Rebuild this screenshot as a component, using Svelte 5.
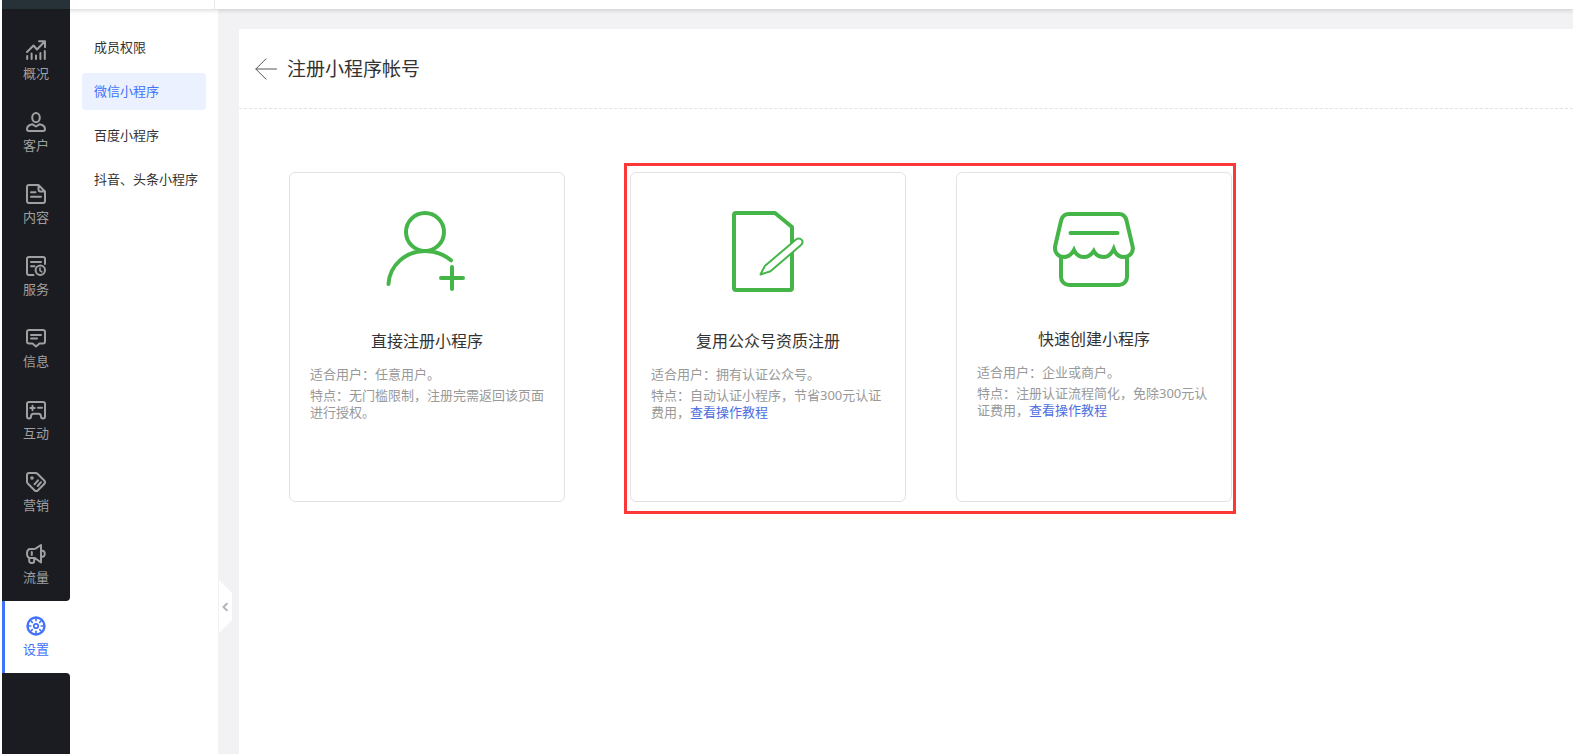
<script>
  const rail = [
    { id: 'overview', label: '概况' },
    { id: 'customer', label: '客户' },
    { id: 'content', label: '内容' },
    { id: 'service', label: '服务' },
    { id: 'message', label: '信息' },
    { id: 'interact', label: '互动' },
    { id: 'marketing', label: '营销' },
    { id: 'traffic', label: '流量' },
    { id: 'settings', label: '设置' }
  ];
  let section = $state('settings');

  const menu = ['成员权限', '微信小程序', '百度小程序', '抖音、头条小程序'];
  let page = $state('微信小程序');
</script>

<div class="app">
  <header class="topbar">
    <div class="brand"></div>
    <div class="corner"></div>
  </header>

  <div class="body">
    <nav class="rail" aria-label="主导航">
      <div class="rail-cap"></div>
      {#each rail as item}
        <button class="rail-item" class:active={section === item.id} onclick={() => (section = item.id)}>
          <svg class="rail-icon" viewBox="0 0 20 20" aria-hidden="true">
            {#if item.id === 'overview'}
              <path d="M1 12 7.5 5.5 11 9.5 18 2.2M13 1.2h6v6" />
              <path d="M1.2 16v3M5.6 13.500v5.500M10 15.500v3.500M14.400 13V19M18.800 11v8" />
            {:else if item.id === 'customer'}
              <ellipse cx="10" cy="5.6" rx="3.8" ry="4.7" />
              <path d="M6.5 12.3c-3 .6-5.5 2-5.5 4.7 0 1.500.8 2 2 2h14c1.200 0 2-.5 2-2 0-2.700-2.500-4.100-5.500-4.700L10 14.500Z" />
            {:else if item.id === 'content'}
              <path d="M12.500 1H3a2 2 0 0 0-2 2v14a2 2 0 0 0 2 2h14a2 2 0 0 0 2-2V7.500ZM12.500 1v4.500a2 2 0 0 0 2 2H19M5 8.200h4.500M5 12.700h10" />
            {:else if item.id === 'service'}
              <path d="M19 8V3a2 2 0 0 0-2-2H3a2 2 0 0 0-2 2v14a2 2 0 0 0 2 2h4.500M5 6h10M5 10.300h3.500" />
              <circle cx="14.300" cy="14.300" r="4.700" />
              <path d="M14 12v2.600l1.800 1.200" stroke-width="1.600" />
            {:else if item.id === 'message'}
              <path d="M3 2h14a2 2 0 0 1 2 2v9.500a2 2 0 0 1-2 2h-3.500L10 18.500l-3.500-3H3a2 2 0 0 1-2-2V4a2 2 0 0 1 2-2ZM5 7h10M5 10.500h6" />
            {:else if item.id === 'interact'}
              <path d="M3 2h14a2 2 0 0 1 2 2v12.500c0 2.500-4 2.500-4 0 0-2-1-2.800-2.500-2.800h-5C6 13.700 5 14.500 5 16.500c0 2.500-4 2.500-4 0V4a2 2 0 0 1 2-2ZM4.300 8h4.400M6.500 5.800v4.400M12 7.800h4" />
            {:else if item.id === 'marketing'}
              <path d="M3 1h6.500a3 3 0 0 1 2 .8l6.700 6.700a2.500 2.500 0 0 1 0 3.500L12 18.200a2.500 2.500 0 0 1-3.500 0L1.800 11.500a3 3 0 0 1-.8-2V3a2 2 0 0 1 2-2ZM8.500 12.300l3.500-4M11.700 14l3.300-3.800" />
              <circle cx="6" cy="6" r=".8" />
            {:else if item.id === 'traffic'}
              <path d="M8 5H4.500C2.500 5 1 6.800 1 9.500S2.500 14 4.500 14H9l6 4.500V1L9.500 4.600ZM15 6.500c5 0 5 6.500 0 6.500M5.800 8v3M3.200 14.500V17a2 2 0 0 0 2 2h1a2 2 0 0 0 2-2v-2.500" />
            {:else}
              <circle cx="10" cy="10" r="8.500" stroke-width="2.400" />
              <circle cx="10" cy="10" r="2.200" stroke-width="1.800" />
              {#each [0, 45, 90, 135, 180, 225, 270, 315] as turn}
                <path d="M10 2.500v2.300" stroke-width="1.600" transform="rotate({turn} 10 10)" />
                <path class="notch" d="M10-.3v.3" transform="rotate({turn + 22.5} 10 10)" />
              {/each}
            {/if}
          </svg>
          <span>{item.label}</span>
        </button>
      {/each}
      <div class="rail-rest"></div>
    </nav>

    <nav class="submenu" aria-label="设置">
      {#each menu as name}
        <button class="sub-item" class:active={page === name} onclick={() => (page = name)}>{name}</button>
      {/each}
      <button class="collapse" aria-label="收起菜单">
        <svg viewBox="0 0 6 8" aria-hidden="true"><path d="M5 .5 1.500 4 5 7.500" /></svg>
      </button>
    </nav>

    <main class="panel">
      <div class="panel-head">
        <button class="back" aria-label="返回">
          <svg viewBox="0 0 22 22" aria-hidden="true"><path d="M21.500 11H1M11 .8.800 11 11 21.200" /></svg>
        </button>
        <h1>注册小程序帐号</h1>
      </div>

      <div class="cards">
        <article class="card">
          <svg class="art" viewBox="0 0 82 82" aria-hidden="true">
            <circle cx="39" cy="21" r="19" />
            <path d="M2.500 73C3.500 54 20 40 39 40c10 0 19 3.500 26 9.300M66 56v22M55 67h22" />
          </svg>
          <h2>直接注册小程序</h2>
          <p>适合用户：任意用户。</p>
          <p>特点：无门槛限制，注册完需返回该页面进行授权。</p>
        </article>

        <div class="featured">
          <article class="card">
            <svg class="art" viewBox="0 0 82 82" aria-hidden="true">
              <path d="M9 2h39l17 14v61a2 2 0 0 1-2 2H9a2 2 0 0 1-2-2V4a2 2 0 0 1 2-2Z" />
              <path class="pen" d="M37.800 55 69 28.500c4.500-3 8.500 1.500 5.300 5.300L43.500 60.300 33.500 63.500Z" />
            </svg>
            <h2>复用公众号资质注册</h2>
            <p>适合用户：拥有认证公众号。</p>
            <p>特点：自动认证小程序，节省300元认证费用，<a href="#reuse">查看操作教程</a></p>
          </article>

          <article class="card">
            <svg class="art short" viewBox="0 0 82 80" aria-hidden="true">
              <path class="sharp" d="M16 3H66c4 0 6.500 2.500 7.500 6.500L79.500 35C81 41 77 46 70.500 46 66 46 62.500 43 60.700 38 58.500 43 55 46 50.500 46 46 46 42.500 43.500 40.700 40 38.500 43.500 35.500 46 31 46 26.500 46 23 43.500 21 39 18.500 43.500 15.500 46 11 46 5 46 1 41 2.200 35L8 10C9 5.500 12 3 16 3Z" />
              <path d="M17.500 22h47M8 47v19a8 8 0 0 0 8 8h50a8 8 0 0 0 8-8V47" />
            </svg>
            <h2>快速创建小程序</h2>
            <p>适合用户：企业或商户。</p>
            <p>特点：注册认证流程简化，免除300元认证费用，<a href="#quick">查看操作教程</a></p>
          </article>
        </div>
      </div>
    </main>
  </div>
</div>

<style>
  :global(body) {
    margin: 0;
    background: #f2f2f5;
  }
  .app {
    display: flex;
    flex-direction: column;
    min-height: 100vh;
    font: 13px/17px 'Noto Sans', 'Noto Sans CJK SC', sans-serif;
    color: #333;
  }
  button {
    margin: 0;
    padding: 0;
    border: 0;
    background: none;
    font: inherit;
    color: inherit;
    cursor: pointer;
  }
  svg {
    display: block;
    fill: none;
    stroke: currentColor;
    stroke-linecap: round;
    stroke-linejoin: round;
  }
  .topbar {
    position: relative;
    z-index: 2;
    display: flex;
    height: 9px;
    padding-left: 2px;
    background: #fff;
    box-shadow: 0 1px 5px rgba(0, 0, 0, 0.18);
  }
  .brand {
    width: 68px;
    background: #263238;
  }
  .corner {
    width: 144px;
    border-right: 1px solid #e8e8e8;
  }
  .body {
    flex: 1;
    display: flex;
  }
  .rail {
    position: relative;
    z-index: 3;
    display: flex;
    flex-direction: column;
    flex: none;
    width: 68px;
    padding-left: 2px;
    background: #fff;
  }
  .rail-cap {
    height: 16px;
    background: #1b1c21;
  }
  .rail-item {
    display: flex;
    flex-direction: column;
    align-items: center;
    gap: 5px;
    box-sizing: border-box;
    height: 72px;
    padding-top: 15px;
    background: #1b1c21;
    color: #a0a0a0;
  }
  .rail-item:has(+ .active) {
    border-bottom-right-radius: 4px;
  }
  .rail-item.active {
    background: #fff;
    color: #4272fb;
    box-shadow: inset 3px 0 #4272fb;
  }
  .rail-item.active + * {
    border-top-right-radius: 4px;
  }
  .rail-icon {
    width: 20px;
    height: 20px;
    stroke-width: 2;
    overflow: visible;
  }
  .notch {
    stroke: #fff;
    stroke-width: 1;
  }
  .rail-rest {
    flex: 1;
    background: #1b1c21;
  }
  .submenu {
    position: relative;
    display: flex;
    flex-direction: column;
    gap: 7px;
    flex: none;
    box-sizing: border-box;
    width: 148px;
    padding: 20px 12px;
    background: #fff;
  }
  .sub-item {
    height: 37px;
    padding-left: 12px;
    border-radius: 3px;
    text-align: left;
    white-space: nowrap;
  }
  .sub-item.active {
    background: #ebf1ff;
    color: #4272fb;
  }
  .collapse {
    position: absolute;
    left: 100%;
    bottom: 121px;
    display: grid;
    place-items: center;
    width: 14px;
    height: 53px;
    background: #fff;
    color: #b5b5b5;
    clip-path: polygon(1px 0, 100% 13px, 100% 40px, 1px 100%);
  }
  .collapse svg {
    width: 6px;
    height: 8px;
    stroke-width: 2;
  }
  .panel {
    flex: 1;
    min-width: 0;
    margin: 20px 0 0 21px;
    background: #fff;
  }
  .panel-head {
    display: flex;
    align-items: center;
    gap: 10px;
    box-sizing: border-box;
    height: 80px;
    padding-left: 16px;
    border-bottom: 1px dashed #e3e3e3;
  }
  .back svg {
    width: 22px;
    height: 22px;
    color: #555;
  }
  h1 {
    margin: 0;
    font-size: 19px;
    line-height: 28px;
    font-weight: 400;
  }
  .cards {
    display: flex;
    gap: 65px;
    padding: 63px 50px;
  }
  .featured {
    position: relative;
    display: flex;
    gap: 50px;
  }
  .featured::after {
    content: '';
    position: absolute;
    inset: -9px -4px -12px -6px;
    border: 3px solid #fc3737;
    pointer-events: none;
  }
  .card {
    flex: none;
    box-sizing: border-box;
    width: 276px;
    min-height: 330px;
    padding: 38px 20px;
    border: 1px solid #e2e2e5;
    border-radius: 6px;
  }
  .art {
    width: 82px;
    height: 82px;
    margin: 0 auto 37px;
    color: #46b549;
    stroke-width: 4;
  }
  .art.short {
    height: 80px;
  }
  .pen {
    fill: #fff;
    stroke-width: 2;
  }
  .sharp {
    stroke-linejoin: miter;
  }
  h2 {
    margin: 0 0 14px;
    font-size: 16px;
    line-height: 22px;
    font-weight: 400;
    text-align: center;
  }
  p {
    margin: 0 0 4px;
    color: #999;
  }
  a {
    color: #4c6ee0;
    text-decoration: none;
  }
</style>
